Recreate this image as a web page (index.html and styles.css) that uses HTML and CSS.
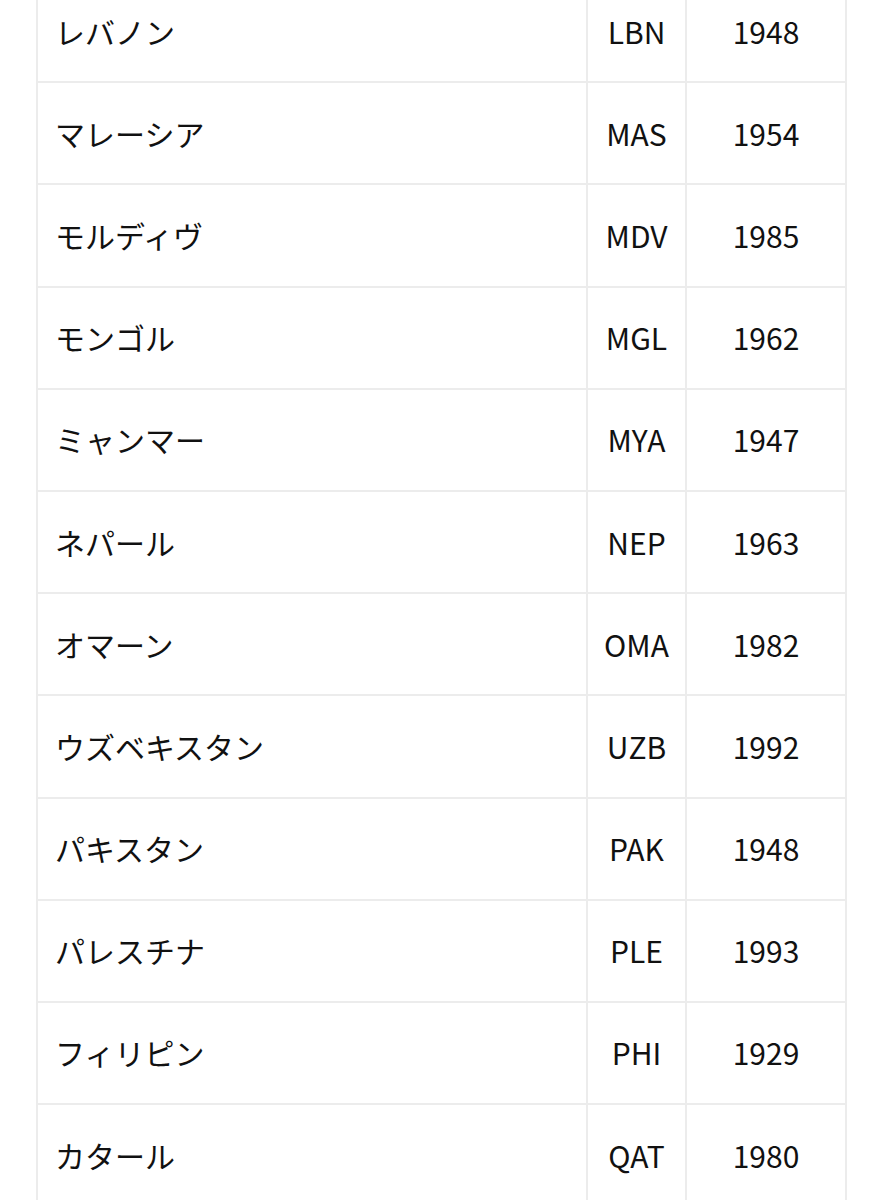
FILE: index.html
```html
<!DOCTYPE html>
<html lang="ja">
<head>
<meta charset="utf-8">
<link rel="stylesheet" href="styles.css">
</head>
<body>
<div class="page">
  <div class="table">
    <div class="row"><div class="cell name">レバノン</div><div class="cell code">LBN</div><div class="cell year">1948</div></div>
    <div class="row"><div class="cell name">マレーシア</div><div class="cell code">MAS</div><div class="cell year">1954</div></div>
    <div class="row"><div class="cell name">モルディヴ</div><div class="cell code">MDV</div><div class="cell year">1985</div></div>
    <div class="row"><div class="cell name">モンゴル</div><div class="cell code">MGL</div><div class="cell year">1962</div></div>
    <div class="row"><div class="cell name">ミャンマー</div><div class="cell code">MYA</div><div class="cell year">1947</div></div>
    <div class="row"><div class="cell name">ネパール</div><div class="cell code">NEP</div><div class="cell year">1963</div></div>
    <div class="row"><div class="cell name">オマーン</div><div class="cell code">OMA</div><div class="cell year">1982</div></div>
    <div class="row"><div class="cell name">ウズベキスタン</div><div class="cell code">UZB</div><div class="cell year">1992</div></div>
    <div class="row"><div class="cell name">パキスタン</div><div class="cell code">PAK</div><div class="cell year">1948</div></div>
    <div class="row"><div class="cell name">パレスチナ</div><div class="cell code">PLE</div><div class="cell year">1993</div></div>
    <div class="row"><div class="cell name">フィリピン</div><div class="cell code">PHI</div><div class="cell year">1929</div></div>
    <div class="row"><div class="cell name">カタール</div><div class="cell code">QAT</div><div class="cell year">1980</div></div>
  </div>
</div>
</body>
</html>
```
FILE: styles.css
```css
html, body {
  margin: 0;
  padding: 0;
  background: #ffffff;
  overflow: hidden;
}
.page {
  padding-left: 36px;
  height: 1200px;
  overflow: hidden;
}
.table {
  margin-top: -19px;
  width: 811px;
  box-sizing: border-box;
  border-left: 2px solid #ececec;
  border-right: 2px solid #ececec;
  font-family: "Noto Sans CJK JP", "Noto Sans", sans-serif;
  font-size: 30px;
  color: #111111;
}
.row {
  display: grid;
  grid-template-columns: 550px 99px 1fr;
  height: 102.2px;
  box-sizing: border-box;
  border-bottom: 2px solid #ececec;
}
.cell {
  display: flex;
  align-items: center;
  padding-bottom: 1px;
  box-sizing: border-box;
}
.name {
  padding-left: 17px;
  border-right: 2px solid #ececec;
}
.code {
  justify-content: center;
  border-right: 2px solid #ececec;
}
.year {
  justify-content: center;
}
```
